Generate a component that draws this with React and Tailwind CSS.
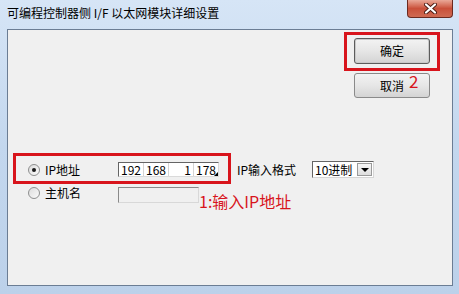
import React from "react";

const FONT = { fontFamily: '"Noto Sans CJK SC", "Noto Sans", sans-serif' };

const Radio = ({ checked }) => (
  <span className="w-[12px] h-[12px] rounded-full border border-[#8e8f8f] bg-gradient-to-br from-[#dcdcdc] to-[#fbfbfb] flex items-center justify-center shrink-0">
    {checked && <span className="w-[4px] h-[4px] rounded-full bg-[#1a1a1a]" />}
  </span>
);

const WinButton = ({ children, isDefault }) => (
  <div
    className={
      "w-[76px] flex items-center justify-center rounded-[3px] border text-[12px] text-black bg-gradient-to-b from-[#f3f3f3] via-[#e6e6e6] to-[#d4d4d4] " +
      (isDefault ? "h-[26px] border-[#5c5c5c] shadow-[inset_0_0_0_1px_#c9c9c9]" : "h-[25px] border-[#8a8a8a]")
    }
  >
    {children}
  </div>
);

const IpField = () => (
  <div className="w-[101px] h-[15px] bg-white border border-t-[#646464] border-l-[#646464] border-r-[#dadada] border-b-[#dadada] flex text-[12px] leading-[13px] text-black relative">
    <span className="w-[25px] pr-[2px] text-right border-r border-[#d4d4d4]">192</span>
    <span className="w-[25px] pr-[2px] text-right border-r border-[#d4d4d4]">168</span>
    <span className="w-[25px] pr-[2px] text-right border-r border-[#d4d4d4]">1</span>
    <span className="flex-1 pl-[2px] text-left">178</span>
    {/* tiny grip in the corner */}
    <span className="absolute right-0 bottom-0 w-0 h-0 border-l-[4px] border-l-transparent border-b-[4px] border-b-black" />
  </div>
);

const Dropdown = () => (
  <div className="w-[62px] h-[17px] bg-white border border-t-[#646464] border-l-[#646464] border-r-[#d6d6d6] border-b-[#d6d6d6] flex items-center text-[12px] text-black">
    <span className="flex-1 pl-[2px] leading-[14px]">10进制</span>
    <span className="w-[15px] h-[13px] mr-[1px] border border-[#9a9a9a] bg-gradient-to-b from-[#f6f6f6] to-[#dedede] flex items-center justify-center">
      <span className="w-0 h-0 border-l-[4px] border-r-[4px] border-t-[4px] border-l-transparent border-r-transparent border-t-black" />
    </span>
  </div>
);

export default function App() {
  return (
    <div
      style={FONT}
      className="w-[459px] h-[294px] relative overflow-hidden bg-gradient-to-b from-[#d6e5f6] via-[#c3d7ee] to-[#bcd1ea]"
    >
      {/* TITLE BAR */}
      <div className="h-[29px] flex items-center pl-[7px] pb-[3px] text-[12px] text-black">
        可编程控制器侧 I/F 以太网模块详细设置
      </div>

      {/* CLOSE BUTTON */}
      <div className="absolute left-[407px] top-0 w-[46px] h-[18px] rounded-b-[4px] border border-t-0 border-[#6b2a20] bg-gradient-to-b from-[#e9a898] via-[#c9503a] to-[#cf6a52] flex items-center justify-center">
        <svg width="13" height="11" viewBox="0 0 13 11">
          <path d="M2 1.5 L11 9.5 M11 1.5 L2 9.5" stroke="#4a1a12" strokeWidth="4" strokeLinecap="round" />
          <path d="M2 1.5 L11 9.5 M11 1.5 L2 9.5" stroke="#ffffff" strokeWidth="2.2" strokeLinecap="round" />
        </svg>
      </div>

      {/* CLIENT AREA */}
      <div className="ml-[7px] w-[446px] h-[257px] bg-[#f0f0f0] border border-[#6b7d94] relative text-[12px] text-black">
        {/* BUTTONS */}
        <div className="flex flex-col items-end pr-[22px] pt-[8px] gap-[9px]">
          <WinButton isDefault>确定</WinButton>
          <WinButton>取消</WinButton>
        </div>

        {/* IP ROW */}
        <div className="flex items-center h-[17px] mt-[63px]">
          <span className="ml-[20px]">
            <Radio checked />
          </span>
          <span className="ml-[5px] w-[73px]">IP地址</span>
          <IpField />
          <span className="ml-[18px] w-[75px]">IP输入格式</span>
          <Dropdown />
        </div>

        {/* HOST ROW */}
        <div className="flex items-center h-[17px] mt-[8px]">
          <span className="ml-[20px] -mt-[4px]">
            <Radio />
          </span>
          <span className="ml-[5px] w-[73px] -mt-[4px]">主机名</span>
          <div className="w-[81px] h-[16px] bg-[#f0f0f0] border border-t-[#8a8a8a] border-l-[#8a8a8a] border-r-[#d8d8d8] border-b-[#d8d8d8]" />
        </div>

        {/* ANNOTATIONS */}
        <div className="absolute left-[336px] top-[2px] w-[96px] h-[39px] border-[3px] border-[#d8141c]" />
        <span className="absolute left-[401px] top-[41px] text-[17px] leading-[20px] text-[#d8141c]">2</span>
        <div className="absolute left-[5px] top-[123px] w-[218px] h-[31px] border-[3px] border-[#d8141c]" />
        <span className="absolute left-[191px] top-[161px] text-[16px] leading-[20px] text-[#d8141c]">1:输入IP地址</span>
      </div>
    </div>
  );
}
